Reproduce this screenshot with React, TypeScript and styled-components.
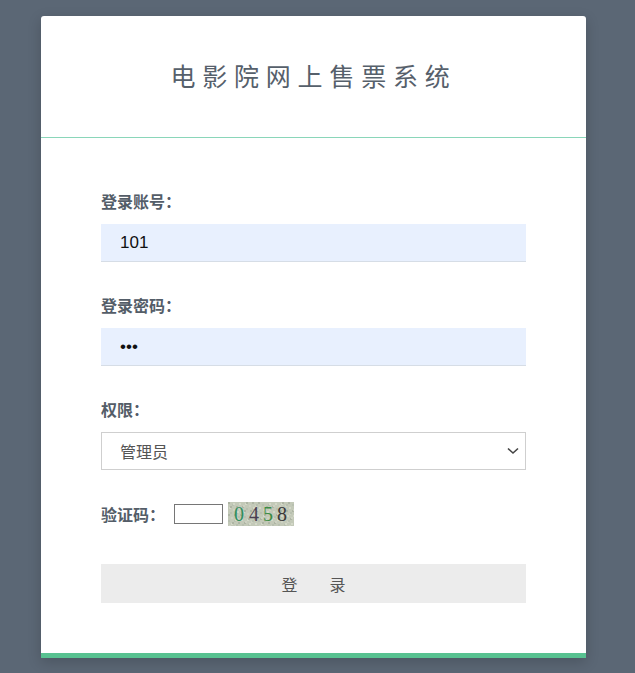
import React from "react";
import styled, { createGlobalStyle } from "styled-components";

const Global = createGlobalStyle`
  html, body { margin: 0; padding: 0; }
  body {
    background: #5b6775;
    font-family: "Noto Sans CJK SC", "Noto Sans", sans-serif;
    min-height: 673px;
  }
`;

const Card = styled.div`
  width: 545px;
  margin: 16px 0 0 41px;
  background: #fff;
  border-radius: 3px 3px 0 0;
  border-bottom: 5px solid #58c291;
  box-shadow: 0 4px 14px rgba(0, 0, 0, 0.18);
`;

const Header = styled.div`
  height: 117px;
  padding-bottom: 4px;
  display: flex;
  align-items: center;
  justify-content: center;
  border-bottom: 1px solid #8ad6b9;
`;

const Title = styled.h1`
  margin: 0;
  font-size: 25px;
  font-weight: 400;
  letter-spacing: 6.8px;
  color: #56606b;
`;

const Form = styled.form`
  padding: 52px 60px 50px;
  display: flex;
  flex-direction: column;
`;

const Field = styled.div`
  display: flex;
  flex-direction: column;
  gap: 12px;
  margin-bottom: 32px;
`;

const Label = styled.label`
  font-size: 16px;
  font-weight: 700;
  line-height: 22px;
  color: #545d68;
`;

const TextInput = styled.input`
  box-sizing: border-box;
  height: 38px;
  width: 100%;
  border: none;
  border-bottom: 1px solid #d6dde6;
  background: #e8f0fe;
  padding: 0 19px;
  font-family: "Liberation Sans", Arial, sans-serif;
  font-size: 17px;
  color: #111;
  outline: none;
`;

const SelectWrap = styled.div`
  position: relative;
`;

const Select = styled.select`
  box-sizing: border-box;
  width: 100%;
  height: 38px;
  appearance: none;
  border: 1px solid #cfcfcf;
  background: #fff;
  padding: 0 18px;
  font-family: "Noto Sans CJK SC", sans-serif;
  font-size: 16px;
  color: #555;
  outline: none;
`;

const Chevron = styled.svg`
  position: absolute;
  right: 6px;
  top: 14px;
  pointer-events: none;
`;

const CaptchaRow = styled.div`
  display: flex;
  align-items: center;
  margin-bottom: 38px;
`;

const CaptchaLabel = styled(Label)`
  margin-right: 9px;
`;

const CaptchaInput = styled.input`
  box-sizing: border-box;
  width: 49px;
  height: 20px;
  border: 1px solid #767676;
  padding: 0 2px;
  margin-right: 5px;
  outline: none;
`;

const Button = styled.button`
  height: 39px;
  width: 100%;
  border: none;
  background: #ececec;
  font-family: "Noto Sans CJK SC", sans-serif;
  font-size: 16px;
  color: #555;
  cursor: pointer;
`;

const Captcha = () => (
  <svg width="66" height="24" viewBox="0 0 66 24">
    <rect width="66" height="24" fill="#c3c9b8" />
    {Array.from({ length: 140 }).map((_, i) => {
      const x = (i * 37) % 66;
      const y = (i * 53) % 24;
      const c = ["#aeb5a4", "#d3d8c8", "#b8c0b0", "#cdd1c2"][i % 4];
      return <rect key={i} x={x} y={y} width="2" height="2" fill={c} />;
    })}
    <g fontFamily="'Liberation Serif', serif" fontSize="20">
      <text x="6" y="19" fill="#2f8f5e">0</text>
      <text x="21" y="19" fill="#4a3f52">4</text>
      <text x="35" y="19" fill="#3c8c44">5</text>
      <text x="49" y="19" fill="#3a3a3a">8</text>
    </g>
  </svg>
);

export default function App() {
  return (
    <>
      <Global />
      <Card>
        <Header>
          <Title>电影院网上售票系统</Title>
        </Header>
        <Form onSubmit={(e) => e.preventDefault()}>
          <Field>
            <Label>登录账号：</Label>
            <TextInput defaultValue="101" />
          </Field>
          <Field>
            <Label>登录密码：</Label>
            <TextInput type="password" defaultValue="123" />
          </Field>
          <Field>
            <Label>权限：</Label>
            <SelectWrap>
              <Select defaultValue="admin">
                <option value="admin">管理员</option>
                <option value="user">用户</option>
              </Select>
              <Chevron width="14" height="10" viewBox="0 0 14 10">
                <path d="M2 2.5 L7 7 L12 2.5" fill="none" stroke="#444" strokeWidth="1.6" />
              </Chevron>
            </SelectWrap>
          </Field>
          <CaptchaRow>
            <CaptchaLabel>验证码：</CaptchaLabel>
            <CaptchaInput />
            <Captcha />
          </CaptchaRow>
          <Button type="submit">登　　录</Button>
        </Form>
      </Card>
    </>
  );
}
